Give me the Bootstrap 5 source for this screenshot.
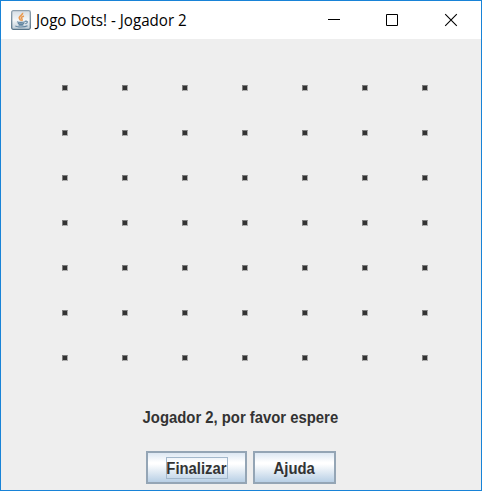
<!DOCTYPE html>
<html lang="pt">
<head>
<meta charset="utf-8">
<title>Jogo Dots! - Jogador 2</title>
<link href="https://cdn.jsdelivr.net/npm/bootstrap@5.3.0/dist/css/bootstrap.min.css" rel="stylesheet">
<style>
body{width:482px;height:491px;overflow:hidden}
.game-window{width:482px;height:491px;border:1px solid #1883d7;background:#eee}
.title-bar{height:38px;padding-left:10px}
.title-text{font:16px/38px "Open Sans","Noto Sans",sans-serif;color:#000;margin-left:5px;white-space:nowrap;transform:scaleX(.945);transform-origin:left}
.win-btn{width:58px;height:38px;padding:0;border:0;background:none}
.win-controls{margin-right:1px}
.dot-board{display:grid;grid-template-columns:repeat(7,60px);grid-auto-rows:45px;margin:46px 0 0 61px;height:319px}
.dot{width:6px;height:6px;background:#333;border:1px solid #7c7c7c;border-right-color:#a8a8a8;border-bottom-color:#b0b0b0}
.status-text,.metal-btn{font-family:"Liberation Sans",Arial,sans-serif;font-weight:700;font-size:16px;color:#333}
.status-text{line-height:20px;margin-top:4px;padding-right:2px}
.fit{display:inline-block;white-space:nowrap;transform:scaleX(.928)}
.button-row{gap:6px;margin-top:23px}
.metal-btn{height:33px;padding:0;border:2px solid #94a5b5;border-radius:0;background:linear-gradient(#dde8f3 0,#fff 32%,#fff 38%,#b8cfe5 100%)}
.finish{width:101px}
.help{width:83px}
.focus-box{display:block;width:62px;height:22px;line-height:21px;margin:0 auto;border:1px solid transparent}
.focus-box .fit{margin:0 -6px}
.finish .focus-box{border-color:#a3b8cc}
</style>
<script src="https://cdn.jsdelivr.net/npm/bootstrap@5.3.0/dist/js/bootstrap.bundle.min.js"></script>
</head>
<body>
<main class="game-window d-flex flex-column">
<header class="title-bar bg-white d-flex align-items-center flex-shrink-0">
<svg width="20" height="20" viewBox="0 0 20 20" aria-hidden="true">
<defs><linearGradient id="g" x2="0" y2="1"><stop stop-color="#8d9fad"/><stop offset="1" stop-color="#587488"/></linearGradient><linearGradient id="h" x2="0" y2="1"><stop stop-color="#d5dde4"/><stop offset=".5" stop-color="#f5f7f8"/><stop offset="1" stop-color="#bccbd6"/></linearGradient></defs>
<rect x=".7" y=".7" width="18.6" height="18.6" rx="1.5" fill="url(#h)" stroke="url(#g)" stroke-width="1.3"/>
<path d="M11.6 2.8c.8 2.4-4.4 3.5-3.2 5.6.3.8 1.2 1.5 1.3 2.3M12.9 5.9c-3 1.2-2.9 2-1.9 3.2.4.6.1 1.2-.5 1.7" fill="none" stroke="#e99a52" stroke-width="1.6"/>
<path d="M6 11.7c1.5 1 6 .9 8 .1M6.8 13.2c1.6.8 4.6.8 6.5.1M7.5 14.6c1.4.6 3.4.6 5 0M14 11.3c3-.8 3.2 1.6.3 2.5M4.5 15.8c1 1.6 9.5 1.6 12 0" fill="none" stroke="#6285a0" stroke-width="1.2"/>
</svg>
<span class="title-text">Jogo Dots! - Jogador 2</span>
<div class="win-controls ms-auto d-flex">
<button class="win-btn" aria-label="Minimizar"><svg class="d-block" width="58" height="38"><path d="M22 18.5h12" stroke="#000"/></svg></button>
<button class="win-btn" aria-label="Maximizar"><svg class="d-block" width="58" height="38"><path d="M22.5 13.5h11v11h-11z" fill="none" stroke="#000"/></svg></button>
<button class="win-btn" aria-label="Fechar"><svg class="d-block" width="58" height="38"><path d="M23.2 13.2l11.6 11.6M34.8 13.2L23.2 24.8" stroke="#000" stroke-width="1.1"/></svg></button>
</div>
</header>
<section class="dot-board flex-shrink-0" id="board"></section>
<div class="status-text text-center"><span class="fit" id="status">Jogador 2, por favor espere</span></div>
<div class="button-row d-flex justify-content-center">
<button class="metal-btn finish"><span class="focus-box"><span class="fit">Finalizar</span></span></button>
<button class="metal-btn help"><span class="focus-box"><span class="fit">Ajuda</span></span></button>
</div>
</main>
<script>
for(let i=0;i<49;i++){const d=document.createElement('div');d.className='dot';document.getElementById('board').append(d)}
</script>
</body>
</html>
